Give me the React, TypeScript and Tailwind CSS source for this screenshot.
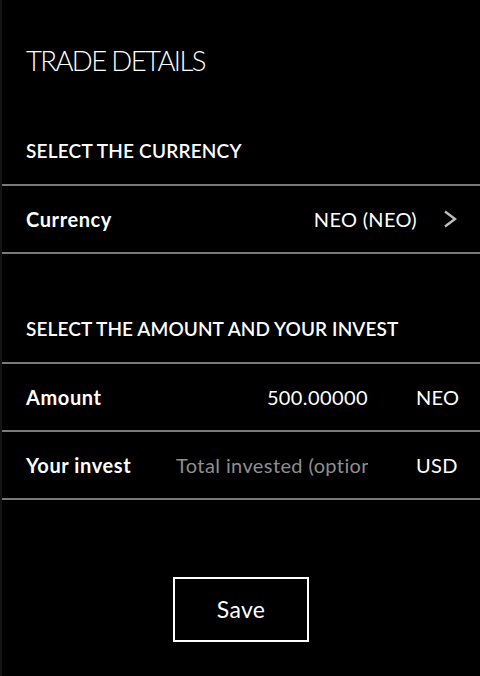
const font = { fontFamily: 'Lato, "Noto Sans", sans-serif' };

function Row({ label, children }: { label: string; children: React.ReactNode }) {
	return (
		<div className="flex h-[68px] items-center border-t-2 border-[#7a7a7a] pl-6 pr-[22px]">
			<span className="w-[150px] shrink-0 text-[20px] font-bold tracking-[0.6px]">{label}</span>
			{children}
		</div>
	);
}

function Chevron() {
	return (
		<svg width="14" height="18" viewBox="0 0 14 18" fill="none" className="text-[#bdbdbd]">
			<polyline points="2,1.5 12,9 2,16.5" stroke="currentColor" strokeWidth="2.4" strokeLinejoin="miter" />
		</svg>
	);
}

export default function App() {
	return (
		<div className="h-[676px] overflow-hidden border-l-2 border-[#141414] bg-black text-white" style={font}>
			<h1 className="mt-[43px] pl-6 text-[27.5px] leading-[36px] font-light tracking-[-1.6px]">TRADE DETAILS</h1>
			<h2 className="mt-[60px] mb-[21px] pl-6 text-[19px] leading-6 font-semibold tracking-[0.2px]">
				SELECT THE CURRENCY
			</h2>

			<div className="border-b-2 border-[#7a7a7a]">
				<Row label="Currency">
					<div className="flex flex-1 items-center justify-end gap-[26px] pr-[1px]">
						<span className="text-[20px] tracking-[0.3px]">NEO (NEO)</span>
						<Chevron />
					</div>
				</Row>
			</div>

			<h2 className="mt-[63px] mb-[21px] pl-6 text-[19px] leading-6 font-semibold tracking-[0.1px]">
				SELECT THE AMOUNT AND YOUR INVEST
			</h2>

			<div className="border-b-2 border-[#7a7a7a]">
				<Row label="Amount">
					<input
						defaultValue="500.00000"
						className="w-[192px] bg-transparent text-right text-[20px] tracking-[0.4px] outline-none"
					/>
					<span className="ml-auto w-[42px] text-[20px] tracking-[0.3px]">NEO</span>
				</Row>
				<Row label="Your invest">
					<input
						placeholder="Total invested (optional)"
						className="w-[192px] bg-transparent text-[20px] tracking-[0.4px] outline-none placeholder:text-[#8f8f8f]"
					/>
					<span className="ml-auto w-[42px] text-[20px] tracking-[0.3px]">USD</span>
				</Row>
			</div>

			<div className="mt-[77px] flex justify-center">
				<button className="h-[65px] w-[136px] border-2 border-white text-[23px] tracking-[0.3px]">Save</button>
			</div>
		</div>
	);
}
